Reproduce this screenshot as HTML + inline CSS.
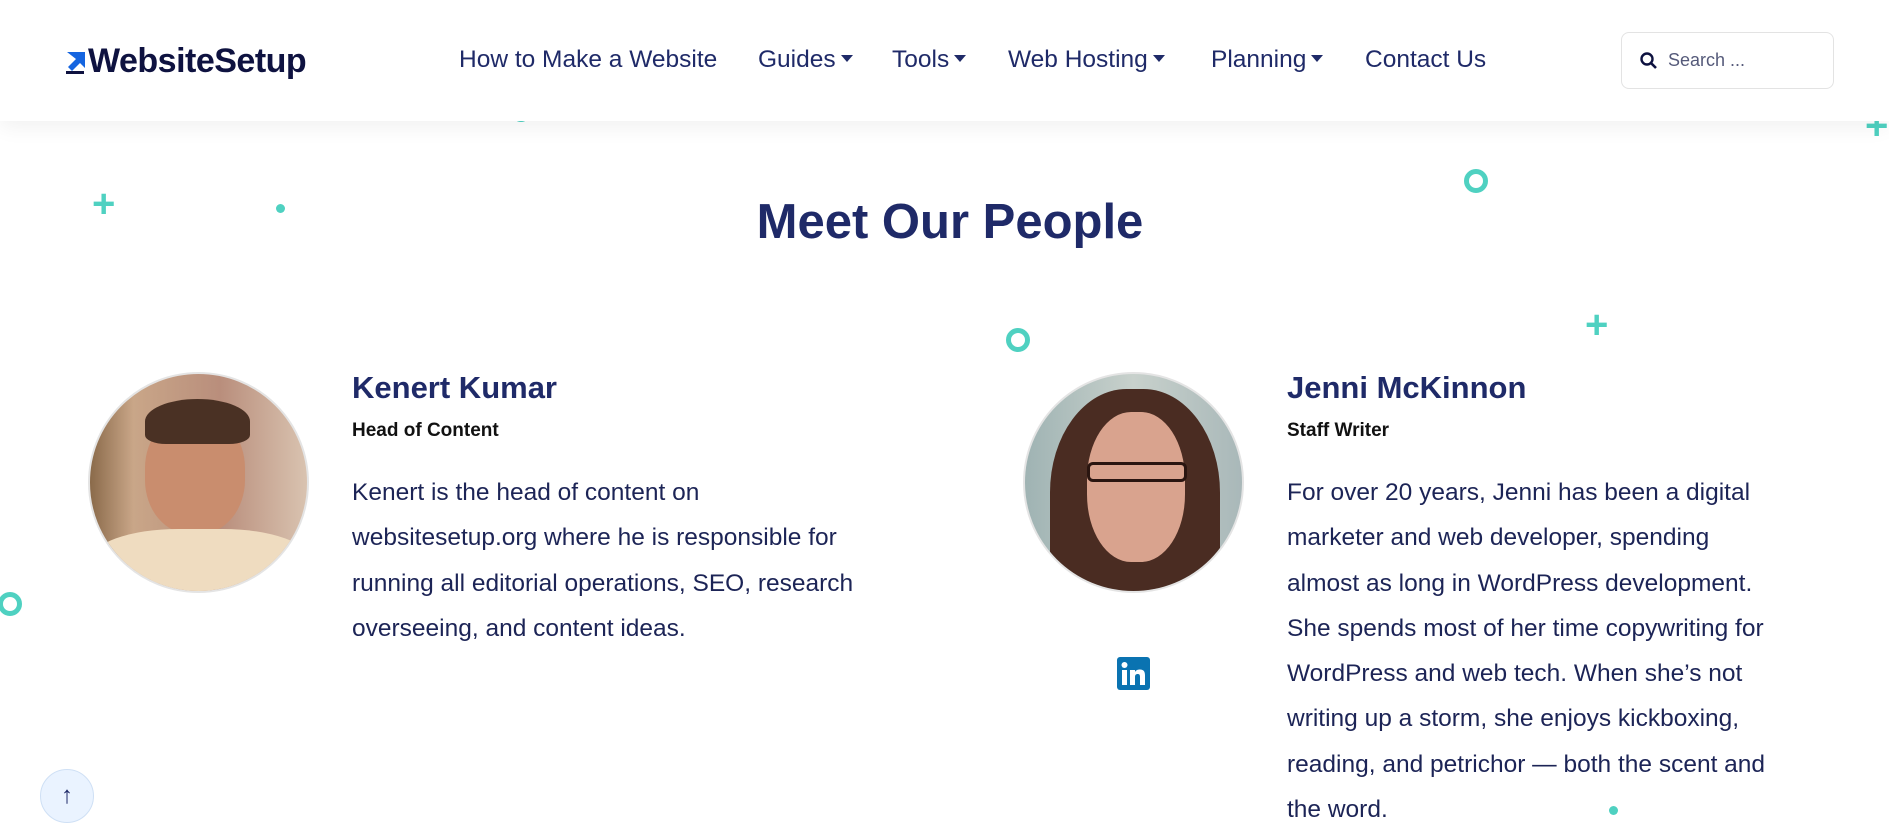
<!DOCTYPE html>
<html><head><meta charset="utf-8"><style>
*{margin:0;padding:0;box-sizing:border-box}
body{width:1889px;height:839px;overflow:hidden;background:#fff;font-family:"Liberation Sans",sans-serif;color:#1c2456;position:relative}
.hdr{position:absolute;left:0;top:0;width:1889px;height:121px;background:#fff;box-shadow:0 6px 20px rgba(0,0,0,.06);z-index:2}
.logo{position:absolute;left:66px;top:42px;font-weight:bold;font-size:34px;color:#0e1240;letter-spacing:-0.5px}
.nav{position:absolute;top:46px;font-size:24.5px;color:#1f2a68}
.car{display:inline-block;width:0;height:0;border-left:6px solid transparent;border-right:6px solid transparent;border-top:7px solid #1f2a68;vertical-align:middle;margin-left:5px;margin-top:-4px}
.search{position:absolute;left:1621px;top:32px;width:213px;height:57px;border:1px solid #e3e3e3;border-radius:8px;font-size:18px;color:#555a7a}
.ring{position:absolute;border:5px solid #4fd1c1;border-radius:50%}
.dot{position:absolute;background:#4fd1c1;border-radius:50%}
.plus{position:absolute;color:#4fd1c1;font-weight:bold}
h1{position:absolute;left:0;width:1900px;text-align:center;top:194px;font-size:49px;color:#1f2a68}
.av{position:absolute;width:221px;height:221px;border-radius:50%;border:2px solid #e4e4e4;overflow:hidden}
.name{position:absolute;font-size:31px;font-weight:bold;color:#1f2a68}
.role{position:absolute;font-size:19px;font-weight:bold;color:#111}
.p{position:absolute;font-size:24.5px;line-height:45.3px;color:#1c2456}
</style></head><body>
<div class="hdr">
<div class="logo"><svg width="20" height="24" viewBox="0 0 20 24" style="vertical-align:-2px;margin-right:2px"><path d="M1 2h18v16l-5-5-8 8-4-4 8-8z" fill="#1565e0"/><rect x="0" y="21" width="18" height="3" fill="#0e1240"/></svg>WebsiteSetup</div>
<div class="nav" style="left:459px">How to Make a Website</div>
<div class="nav" style="left:758px">Guides<span class="car"></span></div>
<div class="nav" style="left:892px">Tools<span class="car"></span></div>
<div class="nav" style="left:1008px">Web Hosting<span class="car"></span></div>
<div class="nav" style="left:1211px">Planning<span class="car"></span></div>
<div class="nav" style="left:1365px">Contact Us</div>
<div class="search"><svg width="20" height="20" viewBox="0 0 20 20" style="position:absolute;left:17px;top:18px"><circle cx="8" cy="8" r="5.5" fill="none" stroke="#0e1240" stroke-width="2.4"/><path d="M12 12l5 5" stroke="#0e1240" stroke-width="2.6"/></svg><span style="position:absolute;left:46px;top:17px">Search ...</span></div>
</div>
<div class="ring" style="left:512px;top:104px;width:18px;height:18px"></div>
<div class="plus" style="left:92px;top:182px;font-size:40px">+</div>
<div class="dot" style="left:276px;top:204px;width:9px;height:9px"></div>
<div class="ring" style="left:1464px;top:169px;width:24px;height:24px"></div>
<div class="ring" style="left:1006px;top:328px;width:24px;height:24px"></div>
<div class="plus" style="left:1585px;top:303px;font-size:40px">+</div>
<div class="ring" style="left:-2px;top:592px;width:24px;height:24px"></div>
<div class="plus" style="left:1865px;top:104px;font-size:40px">+</div>
<div class="dot" style="left:1609px;top:806px;width:9px;height:9px"></div>
<h1>Meet Our People</h1>
<div class="av" style="left:88px;top:372px;background:linear-gradient(90deg,#8a6a4a 0%,#c9a688 20%,#b98e7c 60%,#d9c3b0 100%)">
<div style="position:absolute;left:55px;top:40px;width:100px;height:120px;border-radius:45%;background:#c98d6e"></div>
<div style="position:absolute;left:55px;top:25px;width:105px;height:45px;border-radius:50% 50% 20% 20%;background:#4a3124"></div>
<div style="position:absolute;left:0;top:155px;width:221px;height:80px;border-radius:40% 40% 0 0;background:#efdcc0"></div>
</div>
<div class="name" style="left:352px;top:370px">Kenert Kumar</div>
<div class="role" style="left:352px;top:420px">Head of Content</div>
<div class="p" style="left:352px;top:470px">Kenert is the head of content on<br>websitesetup.org where he is responsible for<br>running all editorial operations, SEO, research<br>overseeing, and content ideas.</div>
<div class="av" style="left:1023px;top:372px;background:linear-gradient(90deg,#9fb3b3,#c8d1cc 50%,#a9b8b9)">
<div style="position:absolute;left:25px;top:15px;width:170px;height:230px;border-radius:45% 45% 10% 10%;background:#4a2c22"></div>
<div style="position:absolute;left:62px;top:38px;width:98px;height:150px;border-radius:45%;background:#d9a38e"></div>
<div style="position:absolute;left:62px;top:88px;width:100px;height:20px;border:3px solid #2a1510;border-radius:6px"></div>
</div>
<svg style="position:absolute;left:1117px;top:657px" width="33" height="33" viewBox="0 0 33 33"><rect width="33" height="33" rx="3" fill="#0a73b1"/><rect x="5" y="13" width="5" height="15" fill="#fff"/><circle cx="7.5" cy="8" r="3" fill="#fff"/><path d="M13 13h5v2c1-2 3-2.5 5-2.5 4 0 5 2.5 5 6V28h-5v-8c0-2-.5-3-2.3-3S18 18 18 20v8h-5z" fill="#fff"/></svg>
<div class="name" style="left:1287px;top:370px">Jenni McKinnon</div>
<div class="role" style="left:1287px;top:420px">Staff Writer</div>
<div class="p" style="left:1287px;top:470px">For over 20 years, Jenni has been a digital<br>marketer and web developer, spending<br>almost as long in WordPress development.<br>She spends most of her time copywriting for<br>WordPress and web tech. When she’s not<br>writing up a storm, she enjoys kickboxing,<br>reading, and petrichor — both the scent and<br>the word.</div>
<div style="position:absolute;left:40px;top:769px;width:54px;height:54px;border-radius:50%;background:#eaf3ff;border:1px solid #cfe0f5;text-align:center;line-height:52px;font-size:24px;color:#1f2a68">↑</div>
</body></html>
